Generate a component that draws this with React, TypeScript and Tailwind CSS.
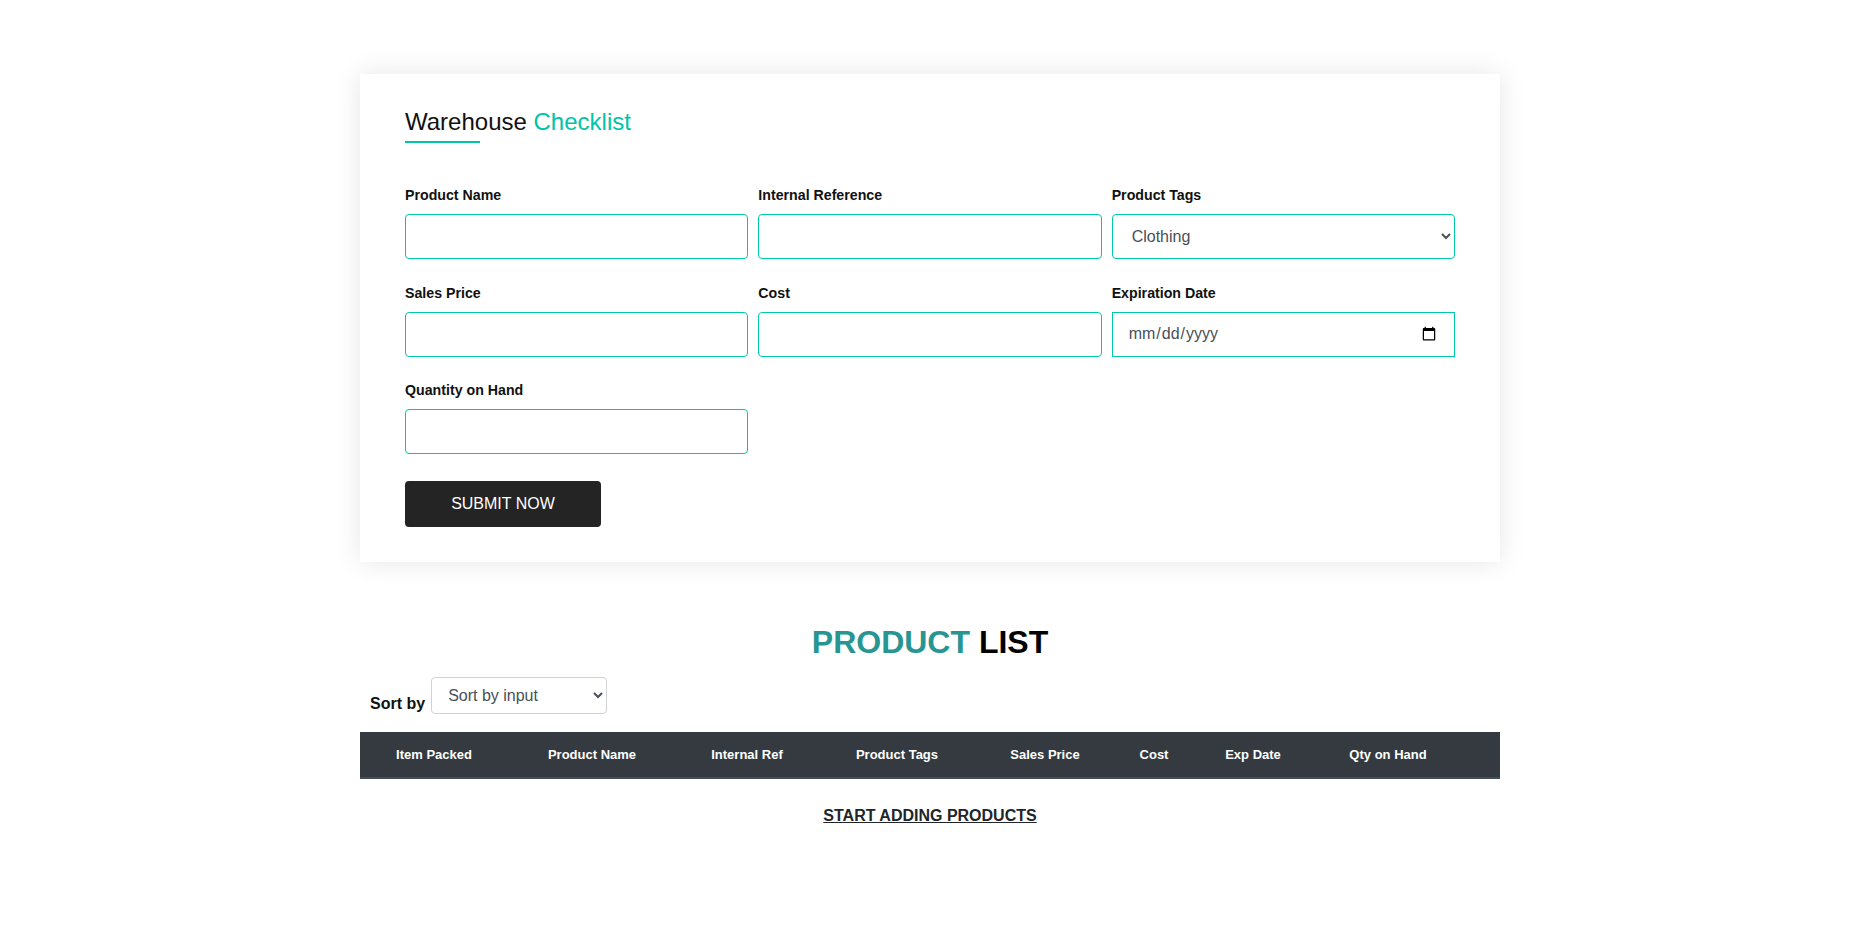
import React from "react";

const fields = [
  { label: "Product Name", type: "text" },
  { label: "Internal Reference", type: "text" },
  { label: "Product Tags", type: "select" },
  { label: "Sales Price", type: "text" },
  { label: "Cost", type: "text" },
  { label: "Expiration Date", type: "date" },
  { label: "Quantity on Hand", type: "text" },
];

const columns = [
  { name: "Item Packed", width: "w-[148px]" },
  { name: "Product Name", width: "w-[168px]" },
  { name: "Internal Ref", width: "w-[142px]" },
  { name: "Product Tags", width: "w-[158px]" },
  { name: "Sales Price", width: "w-[138px]" },
  { name: "Cost", width: "w-[80px]" },
  { name: "Exp Date", width: "w-[118px]" },
  { name: "Qty on Hand", width: "w-[152px]" },
];

const Field = ({ label, type }: { label: string; type: string }) => {
  return (
    <div className="flex flex-col">
      <label className="mb-[9px] text-[14.2px] leading-[20px] font-bold text-[#111]">
        {label}
      </label>
      {type === "select" ? (
        <select
          defaultValue="Clothing"
          className="h-[45px] w-full rounded-[4px] border border-[#00c9a7] bg-white px-[15px] text-[16px] text-[#495057] outline-none"
        >
          <option>Clothing</option>
          <option>Electronics</option>
          <option>Food</option>
          <option>Furniture</option>
        </select>
      ) : type === "date" ? (
        <input
          type="date"
          className="h-[45px] w-full border border-[#00c9a7] bg-white px-[15px] text-[16px] text-[#495057] outline-none"
        />
      ) : (
        <input
          type="text"
          className="h-[45px] w-full rounded-[4px] border border-[#00c9a7] bg-white px-[15px] text-[16px] text-[#495057] outline-none"
        />
      )}
    </div>
  );
};

const App = () => {
  return (
    <div className="min-h-screen bg-white pt-[74px] pl-[2px] font-['Liberation_Sans',Arial,sans-serif] text-[#212529]">
      <div className="mx-auto w-[1140px]">
        {/* form card */}
        <div className="bg-white px-[45px] pt-[33px] pb-[35px] shadow-[0_0_25px_rgba(0,0,0,0.1)]">
          <h2 className="text-[24px] leading-[29px] font-normal text-[#111]">
            Warehouse <span className="text-[#00c4a7]">Checklist</span>
          </h2>
          <div className="mt-[5px] h-[2px] w-[75px] bg-[#00c4a7]"></div>

          <form className="mt-[42px]" onSubmit={(e) => e.preventDefault()}>
            <div className="grid grid-cols-3 gap-x-[10px] gap-y-[23.5px]">
              {fields.map((f) => (
                <Field key={f.label} label={f.label} type={f.type} />
              ))}
            </div>
            <button
              type="submit"
              className="mt-[27px] h-[46px] w-[196px] rounded-[4px] bg-[#242424] text-[16px] text-white"
            >
              SUBMIT NOW
            </button>
          </form>
        </div>

        {/* product list */}
        <h1 className="mt-[61px] text-center text-[32px] leading-[38px] font-bold text-black">
          <span className="text-[#279592]">PRODUCT</span> LIST
        </h1>

        <div className="mt-[16px] flex items-end pl-[10px]">
          <span className="text-[16px] leading-[20px] font-bold text-[#111]">Sort by</span>
          <select
            defaultValue="input"
            className="ml-[6px] h-[37px] w-[176px] rounded-[4px] border border-[#ced4da] bg-white px-[12px] text-[16px] text-[#495057] outline-none"
          >
            <option value="input">Sort by input</option>
            <option value="name">Product Name</option>
            <option value="price">Sales Price</option>
            <option value="date">Exp Date</option>
          </select>
        </div>

        <table className="mt-[18px] w-full table-fixed border-collapse">
          <thead>
            <tr className="h-[46px] border-b-2 border-[#454d55] bg-[#343a40]">
              {columns.map((c) => (
                <th
                  key={c.name}
                  className={`${c.width} text-center text-[13px] font-bold text-white`}
                >
                  {c.name}
                </th>
              ))}
              <th></th>
            </tr>
          </thead>
        </table>

        <p className="mt-[27px] text-center text-[16px] leading-[20px] font-bold text-[#212529]">
          <a href="#" className="underline">
            START ADDING PRODUCTS
          </a>
        </p>
      </div>
    </div>
  );
};

export default App;
